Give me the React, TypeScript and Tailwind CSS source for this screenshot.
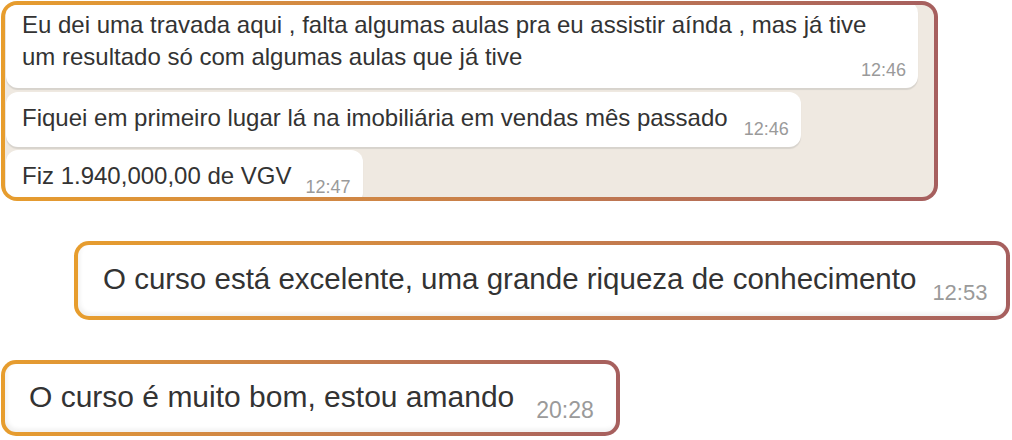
import React from "react";

const border = "bg-linear-to-r from-[#e79d2d] via-[#c98049] to-[#a65f5e]";

export default function App() {
  return (
    <div className="w-[1012px] h-[440px] bg-white overflow-hidden flex flex-col items-start pt-[1px] font-['Liberation_Sans',Arial,sans-serif] text-[#333333]">
      {/* Card 1 */}
      <div className={`ml-[1px] w-[937px] h-[200px] rounded-[16px] p-[4px] ${border}`}>
        <div className="h-full w-full rounded-[12px] overflow-hidden bg-[#efe9e1] flex flex-col items-start">
          <div className="-mt-[4px] ml-[1px] w-[912px] rounded-[12px] bg-white pt-[8px] pb-[8px] pl-[16px] pr-[12px] shadow-[0_2px_1px_rgba(11,20,26,0.10)]">
            <p className="text-[24px] leading-[32px] whitespace-nowrap">
              Eu dei uma travada aqui , falta algumas aulas pra eu assistir aínda , mas já tive
              <br />
              um resultado só com algumas aulas que já tive
            </p>
            <div className="flex justify-end -mt-[13px] text-[18px] leading-[20px] text-[#9a9a9a]">12:46</div>
          </div>
          <div className="mt-[4px] ml-[1px] inline-flex items-start rounded-[12px] bg-white pt-[10px] pb-[8px] pl-[16px] pr-[12px] shadow-[0_2px_1px_rgba(11,20,26,0.10)]">
            <span className="text-[24px] leading-[32px] whitespace-nowrap">
              Fiquei em primeiro lugar lá na imobiliária em vendas mês passado
            </span>
            <span className="ml-[16px] mt-[17px] text-[18px] leading-[20px] text-[#9a9a9a]">12:46</span>
          </div>
          <div className="mt-[3px] ml-[1px] inline-flex items-start rounded-[12px] bg-white pt-[10px] pb-[8px] pl-[16px] pr-[12px] shadow-[0_2px_1px_rgba(11,20,26,0.10)]">
            <span className="text-[24px] leading-[32px] whitespace-nowrap">Fiz 1.940,000,00 de VGV</span>
            <span className="ml-[14px] mt-[17px] text-[18px] leading-[20px] text-[#9a9a9a]">12:47</span>
          </div>
        </div>
      </div>

      {/* Card 2 */}
      <div className={`mt-[40px] ml-[74px] w-[936px] h-[79px] rounded-[15px] p-[4px] ${border}`}>
        <div className="h-full w-full rounded-[11px] bg-white flex items-start pl-[25px] pt-[16px] shadow-[inset_2px_-3px_4px_rgba(0,0,0,0.06)]">
          <span className="text-[29.5px] leading-[36px] whitespace-nowrap">
            O curso está excelente, uma grande riqueza de conhecimento
          </span>
          <span className="ml-[16px] mt-[20px] text-[22px] leading-[24px] text-[#9a9a9a]">12:53</span>
        </div>
      </div>

      {/* Card 3 */}
      <div className={`mt-[40px] ml-[1px] w-[619px] h-[76px] rounded-[15px] p-[4px] ${border}`}>
        <div className="h-full w-full rounded-[11px] bg-white flex items-start pl-[24px] pt-[15px] shadow-[inset_2px_-3px_4px_rgba(0,0,0,0.06)]">
          <span className="text-[30px] leading-[36px] whitespace-nowrap">O curso é muito bom, estou amando</span>
          <span className="ml-[22px] mt-[19px] text-[23px] leading-[24px] text-[#9a9a9a]">20:28</span>
        </div>
      </div>
    </div>
  );
}
